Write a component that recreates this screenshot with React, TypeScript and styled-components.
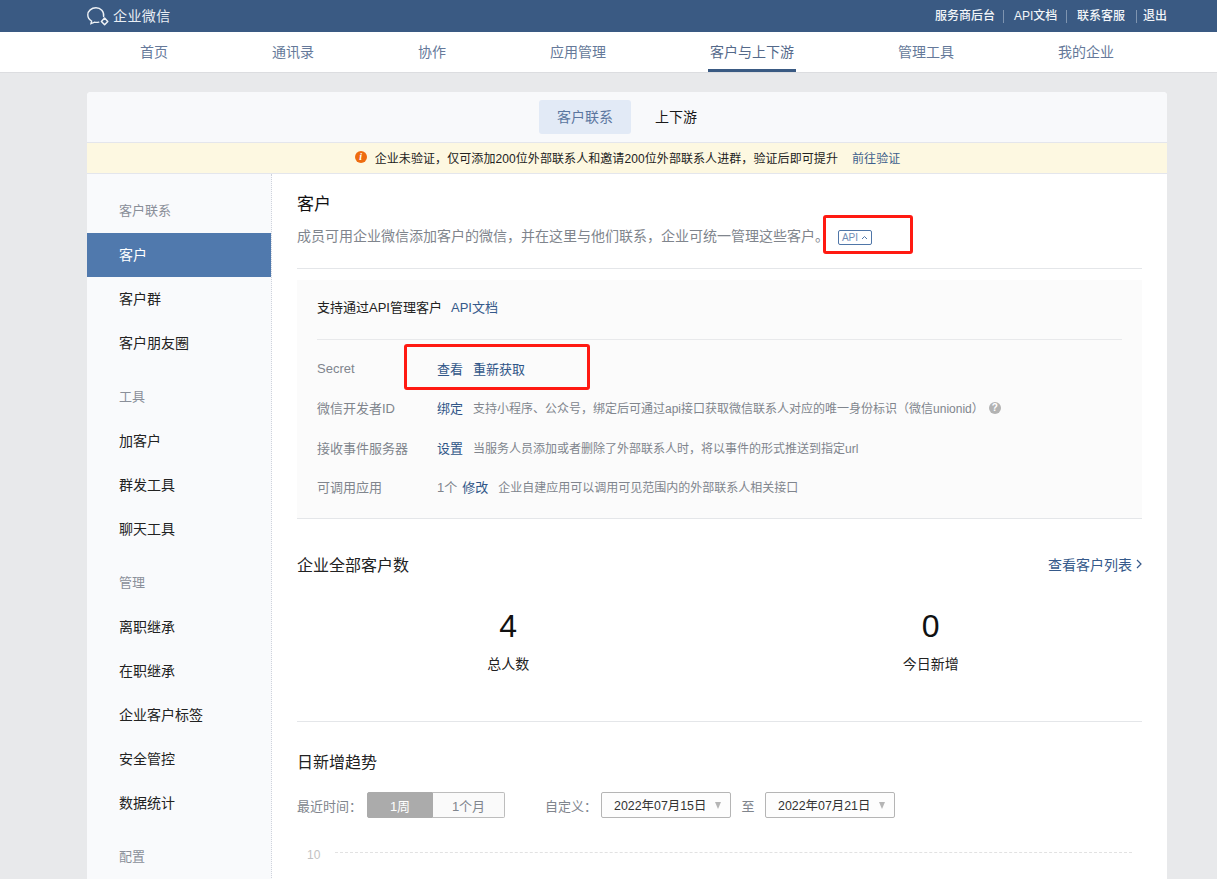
import React from "react";
import styled, { createGlobalStyle } from "styled-components";

const Global = createGlobalStyle`
  html, body { margin: 0; padding: 0; height: 879px; overflow: hidden; background: #e8e9eb; }
  body { font-family: "Liberation Sans", "Noto Sans CJK SC", sans-serif; font-size: 13px; color: #000; }
  * { box-sizing: border-box; }
`;

const Page = styled.div`
  width: 1217px;
  height: 879px;
  overflow: hidden;
  display: flex;
  flex-direction: column;
  position: relative;
`;
const TopBar = styled.header`
  height: 32px;
  flex: none;
  background: #3a5a83;
  padding: 0 50px 0 87px;
  display: flex;
  align-items: center;
  justify-content: space-between;
`;
const Brand = styled.div`
  display: flex;
  align-items: center;
  gap: 3px;
  color: #e9eef4;
`;
const BrandName = styled.span`
  font-size: 14px;
  letter-spacing: 0.4px;
  padding-bottom: 2px;
`;
const TopLinks = styled.nav`
  display: flex;
  align-items: center;
  color: #f2f5f8;
  font-size: 12px;
  font-weight: 500;
`;
const TopLink = styled.span<{ $sep?: number; $w: number }>`
  width: ${(p) => p.$w}px;
  white-space: nowrap;
  height: 13px;
  line-height: 13px;
  position: relative;
  ${(p) =>
    p.$sep
      ? `&::after { content: ''; position: absolute; right: ${p.$sep}px; top: 0; width: 1px; height: 13px; background: #7e94b0; }`
      : ""}
`;
const NavBar = styled.nav`
  height: 41px;
  flex: none;
  background: #fff;
  border-bottom: 1px solid #dcdde0;
  display: flex;
  gap: 104px;
  padding-left: 140px;
`;
const NavItem = styled.div<{ $active?: boolean }>`
  height: 40px;
  padding-bottom: 2px;
  display: flex;
  align-items: center;
  font-size: 14px;
  color: ${(p) => (p.$active ? "#54698a" : "#65799a")};
  position: relative;
  ${(p) =>
    p.$active
      ? "&::after { content: ''; position: absolute; left: -2px; right: -2px; bottom: 0; height: 3px; background: #3a5a83; }"
      : ""}
`;
const Card = styled.main`
  margin: 19px 0 0 87px;
  width: 1080px;
  flex: none;
  height: 800px;
  background: #fff;
  border-radius: 4px 4px 0 0;
  overflow: hidden;
`;
const TabBar = styled.div`
  height: 50px;
  background: #f8f9fb;
  display: flex;
  justify-content: center;
  align-items: center;
  padding-left: 6px;
`;
const Tab = styled.div<{ $active?: boolean }>`
  width: ${(p) => (p.$active ? 92 : 90)}px;
  height: 34px;
  padding-bottom: 2px;
  border-radius: 3px;
  display: flex;
  align-items: center;
  justify-content: center;
  font-size: 14px;
  color: ${(p) => (p.$active ? "#5b769f" : "#1a1a1a")};
  background: ${(p) => (p.$active ? "#e2eaf6" : "transparent")};
`;
const Notice = styled.div`
  height: 32px;
  background: #fdf8e1;
  border-top: 1px solid #e4e6ec;
  border-bottom: 1px solid #e4e6ec;
  display: flex;
  justify-content: center;
  align-items: center;
  font-size: 12px;
  letter-spacing: 0.08px;
  color: #222;
  padding: 0 0 2px 1px;
`;
const NoticeIcon = styled.span`
  width: 12px;
  height: 12px;
  border-radius: 50%;
  background: #ee6c10;
  color: #fff;
  font: italic bold 10px/12px "Liberation Serif", serif;
  text-align: center;
  margin-right: 8px;
`;
const NoticeLink = styled.span`
  color: #3d5f8c;
  margin-left: 14px;
`;
const Body = styled.div`
  display: flex;
  height: 718px;
`;
const Side = styled.aside`
  width: 185px;
  flex: none;
  background: #f9fafc;
  border-right: 1px dotted #cfd3dc;
  padding-top: 15px;
`;
const SideHead = styled.div<{ $gap?: boolean }>`
  height: 44px;
  padding: 0 0 4px 32px;
  display: flex;
  align-items: center;
  font-size: 13px;
  color: #8a8f99;
  margin-top: ${(p) => (p.$gap ? "10px" : "0")};
`;
const SideItem = styled.div<{ $active?: boolean }>`
  height: 44px;
  padding: 0 0 2px 32px;
  display: flex;
  align-items: center;
  font-size: 14px;
  color: ${(p) => (p.$active ? "#fff" : "#222")};
  background: ${(p) => (p.$active ? "#5079ad" : "transparent")};
`;
const Content = styled.section`
  flex: 1;
  padding: 20px 25px 0;
  min-width: 0;
`;
const PageTitle = styled.h1`
  margin: 0;
  font-size: 17px;
  font-weight: 400;
  line-height: 22px;
  color: #111;
`;
const Lead = styled.div`
  margin-top: 10px;
  font-size: 14px;
  line-height: 20px;
  color: #80858d;
  display: flex;
  align-items: center;
  padding-bottom: 22px;
  border-bottom: 1px solid #e4e6e9;
`;
const Badge = styled.span`
  width: 34px;
  height: 15px;
  margin: 2px 0 0 9px;
  border: 1px solid #4f76a8;
  border-radius: 2px;
  color: #6f8db5;
  font-size: 10px;
  line-height: 13px;
  display: flex;
  align-items: center;
  justify-content: center;
  gap: 3px;
`;
const Mark = styled.div<{ $w: number; $h: number; $x: number; $y: number }>`
  position: absolute;
  left: ${(p) => p.$x}px;
  top: ${(p) => p.$y}px;
  width: ${(p) => p.$w}px;
  height: ${(p) => p.$h}px;
  border: 3px solid #ff1a12;
  border-radius: 3px;
  pointer-events: none;
`;
const ApiPanel = styled.div`
  margin-top: 11px;
  background: #fbfbfb;
  border-bottom: 1px solid #e4e6e9;
  padding: 0 20px;
  height: 239px;
`;
const ApiHead = styled.div`
  height: 60px;
  padding-bottom: 6px;
  display: flex;
  align-items: center;
  gap: 9px;
  font-size: 13px;
  color: #222;
  border-bottom: 1px solid #e8e9eb;
`;
const Link = styled.span`
  color: #35598a;
`;
const ApiRows = styled.div`
  padding-top: 9px;
`;
const ApiRow = styled.div`
  height: 39.3px;
  display: flex;
  align-items: center;
  font-size: 13px;
  white-space: nowrap;
`;
const ApiLabel = styled.span`
  width: 120px;
  color: #80858d;
  flex: none;
`;
const ApiAction = styled.span`
  color: #2f5587;
  margin-right: 10px;
`;
const Hint = styled.span`
  color: #80858d;
  font-size: 12px;
`;
const Count = styled.span`
  color: #80858d;
  margin-right: 5px;
`;
const Help = styled.span`
  width: 12px;
  height: 12px;
  margin-left: 5px;
  border-radius: 50%;
  background: #b3b3b3;
  color: #fff;
  font-size: 10px;
  font-weight: 700;
  line-height: 12px;
  text-align: center;
`;
const SectionHead = styled.div`
  display: flex;
  justify-content: space-between;
  align-items: center;
  margin-top: 33px;
  height: 24px;
`;
const SectionTitle = styled.h2`
  margin: 0;
  font-size: 16px;
  font-weight: 400;
  color: #222;
`;
const MoreLink = styled.span`
  display: flex;
  align-items: center;
  gap: 4px;
  font-size: 14px;
  color: #35598a;
`;
const Stats = styled.div`
  display: flex;
  height: 146px;
  padding-top: 32px;
  border-bottom: 1px solid #e4e6e9;
`;
const Stat = styled.div`
  flex: 1;
  display: flex;
  flex-direction: column;
  align-items: center;
`;
const StatNum = styled.div`
  font-size: 32px;
  line-height: 37px;
  color: #111;
`;
const StatLabel = styled.div`
  margin-top: 10px;
  font-size: 14px;
  line-height: 18px;
  color: #222;
`;
const TrendTitle = styled.h2`
  margin: 30px 0 0;
  font-size: 16px;
  line-height: 22px;
  font-weight: 400;
  color: #222;
`;
const Filters = styled.div`
  display: flex;
  align-items: center;
  margin-top: 18px;
  height: 26px;
  font-size: 13px;
  color: #80858d;
`;
const RecentLabel = styled.span`
  margin-right: 5px;
`;
const Seg = styled.div<{ $on?: boolean; $w: number }>`
  width: ${(p) => p.$w}px;
  height: 26px;
  display: flex;
  align-items: center;
  justify-content: center;
  font-size: 13px;
  background: ${(p) => (p.$on ? "#ababab" : "#fafafa")};
  color: ${(p) => (p.$on ? "#fff" : "#80858d")};
  border: 1px solid ${(p) => (p.$on ? "#ababab" : "#bdbdbd")};
  border-left-width: ${(p) => (p.$on ? "1px" : "0")};
  border-radius: ${(p) => (p.$on ? "2px 0 0 2px" : "0 2px 2px 0")};
`;
const Select = styled.div`
  width: 130px;
  height: 26px;
  border: 1px solid #b5b5b5;
  border-radius: 2px;
  background: #fdfdfd;
  color: #333;
  font-size: 12.4px;
  display: flex;
  align-items: center;
  justify-content: space-between;
  padding: 0 9px 0 12px;
`;
const Caret = styled.span`
  width: 0;
  height: 0;
  border-left: 3px solid transparent;
  border-right: 3px solid transparent;
  border-top: 7px solid #b5b5b5;
`;
const CustomLabel = styled.span`
  margin: 0 4px 0 40px;
`;
const To = styled.span`
  width: 34px;
  text-align: center;
`;
const Axis = styled.div`
  display: flex;
  align-items: center;
  margin-top: 30px;
  color: #c2c2c2;
  font-size: 12px;
  gap: 15px;
  padding: 0 10px;
`;
const AxisLine = styled.div`
  flex: 1;
  margin-top: -6px;
  border-top: 1px dashed #e2e2e2;
`;

const Logo = () => (
  <svg width="23" height="19" viewBox="0 0 23 19" fill="none" stroke="#eef2f6" strokeWidth="1.4">
    <path d="M16.6 9.6 C17.4 4.6 13.6 0.8 9 0.8 C4.4 0.8 0.8 4 0.8 7.8 C0.8 10.6 2.4 12.8 4.6 14 L4 16.6 L7.6 15.2 C9 15.5 10.4 15.5 11.8 15.1" strokeLinecap="round" />
    <path d="M17.6 11 L20.8 14.4 L17.6 17.8 L14.4 14.4 Z" strokeWidth="1.5" strokeLinejoin="round" />
  </svg>
);

const nav: [string, boolean?][] = [
  ["首页"],
  ["通讯录"],
  ["协作"],
  ["应用管理"],
  ["客户与上下游", true],
  ["管理工具"],
  ["我的企业"],
];

type SideEntry = { t: string; head?: boolean; gap?: boolean; on?: boolean };
const side: SideEntry[] = [
  { t: "客户联系", head: true },
  { t: "客户", on: true },
  { t: "客户群" },
  { t: "客户朋友圈" },
  { t: "工具", head: true, gap: true },
  { t: "加客户" },
  { t: "群发工具" },
  { t: "聊天工具" },
  { t: "管理", head: true, gap: true },
  { t: "离职继承" },
  { t: "在职继承" },
  { t: "企业客户标签" },
  { t: "安全管控" },
  { t: "数据统计" },
  { t: "配置", head: true, gap: true },
];

export default function App() {
  return (
    <Page>
      <Global />
      <TopBar>
        <Brand>
          <Logo />
          <BrandName>企业微信</BrandName>
        </Brand>
        <TopLinks>
          <TopLink $sep={10} $w={79}>服务商后台</TopLink>
          <TopLink $sep={10} $w={63}>API文档</TopLink>
          <TopLink $sep={6} $w={66}>联系客服</TopLink>
          <TopLink $w={24}>退出</TopLink>
        </TopLinks>
      </TopBar>
      <NavBar>
        {nav.map(([t, a]) => (
          <NavItem key={t} $active={a}>{t}</NavItem>
        ))}
      </NavBar>
      <Card>
        <TabBar>
          <Tab $active>客户联系</Tab>
          <Tab>上下游</Tab>
        </TabBar>
        <Notice>
          <NoticeIcon>i</NoticeIcon>
          企业未验证，仅可添加200位外部联系人和邀请200位外部联系人进群，验证后即可提升
          <NoticeLink>前往验证</NoticeLink>
        </Notice>
        <Body>
          <Side>
            {side.map((s) =>
              s.head ? (
                <SideHead key={s.t} $gap={s.gap}>{s.t}</SideHead>
              ) : (
                <SideItem key={s.t} $active={s.on}>{s.t}</SideItem>
              )
            )}
          </Side>
          <Content>
            <PageTitle>客户</PageTitle>
            <Lead>
              成员可用企业微信添加客户的微信，并在这里与他们联系，企业可统一管理这些客户。
              <Badge>
                API
                <svg width="7" height="5" viewBox="0 0 7 5" fill="none" stroke="#4f76a8" strokeWidth="1"><path d="M1 4 L3.5 1.5 L6 4" /></svg>
              </Badge>
            </Lead>
            <ApiPanel>
              <ApiHead>
                支持通过API管理客户
                <Link>API文档</Link>
              </ApiHead>
              <ApiRows>
                <ApiRow>
                  <ApiLabel>Secret</ApiLabel>
                  <ApiAction>查看</ApiAction>
                  <ApiAction>重新获取</ApiAction>
                </ApiRow>
                <ApiRow>
                  <ApiLabel>微信开发者ID</ApiLabel>
                  <ApiAction>绑定</ApiAction>
                  <Hint>支持小程序、公众号，绑定后可通过api接口获取微信联系人对应的唯一身份标识（微信unionid）</Hint>
                  <Help>?</Help>
                </ApiRow>
                <ApiRow>
                  <ApiLabel>接收事件服务器</ApiLabel>
                  <ApiAction>设置</ApiAction>
                  <Hint>当服务人员添加或者删除了外部联系人时，将以事件的形式推送到指定url</Hint>
                </ApiRow>
                <ApiRow>
                  <ApiLabel>可调用应用</ApiLabel>
                  <Count>1个</Count>
                  <ApiAction>修改</ApiAction>
                  <Hint>企业自建应用可以调用可见范围内的外部联系人相关接口</Hint>
                </ApiRow>
              </ApiRows>
            </ApiPanel>
            <SectionHead>
              <SectionTitle>企业全部客户数</SectionTitle>
              <MoreLink>
                查看客户列表
                <svg width="6" height="10" viewBox="0 0 6 10" fill="none" stroke="#35598a" strokeWidth="1.2"><path d="M1 1 L5 5 L1 9" /></svg>
              </MoreLink>
            </SectionHead>
            <Stats>
              <Stat>
                <StatNum>4</StatNum>
                <StatLabel>总人数</StatLabel>
              </Stat>
              <Stat>
                <StatNum>0</StatNum>
                <StatLabel>今日新增</StatLabel>
              </Stat>
            </Stats>
            <TrendTitle>日新增趋势</TrendTitle>
            <Filters>
              <RecentLabel>最近时间：</RecentLabel>
              <Seg $on $w={66}>1周</Seg>
              <Seg $w={72}>1个月</Seg>
              <CustomLabel>自定义：</CustomLabel>
              <Select>2022年07月15日<Caret /></Select>
              <To>至</To>
              <Select>2022年07月21日<Caret /></Select>
            </Filters>
            <Axis>
              10
              <AxisLine />
            </Axis>
          </Content>
        </Body>
      </Card>
      <Mark $x={823} $y={215} $w={90} $h={39} />
      <Mark $x={404} $y={344} $w={186} $h={46} />
    </Page>
  );
}
